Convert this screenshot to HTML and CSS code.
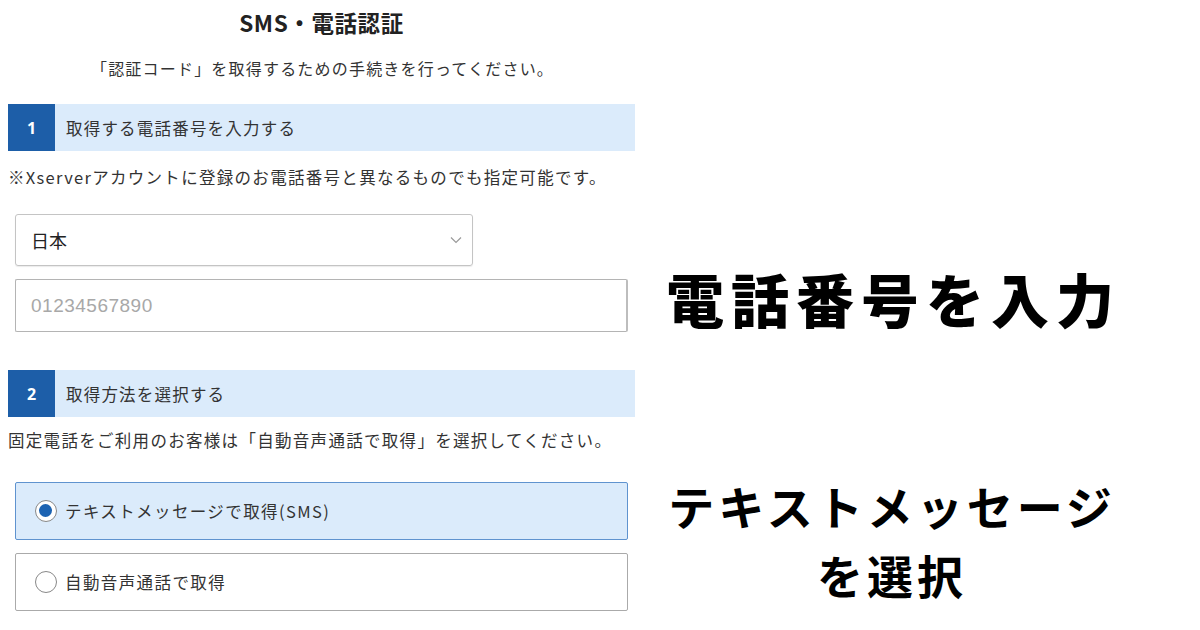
FILE: index.html
```html
<!DOCTYPE html>
<html lang="ja">
<head>
<meta charset="utf-8">
<link rel="stylesheet" href="styles.css">
</head>
<body>
<div class="page">
  <div class="form">
    <h1 class="title">SMS・電話認証</h1>
    <p class="lead">「認証コード」を取得するための手続きを行ってください。</p>

    <div class="step step-1">
      <div class="step-num">1</div>
      <div class="step-label">取得する電話番号を入力する</div>
    </div>
    <p class="note note-1">※Xserverアカウントに登録のお電話番号と異なるものでも指定可能です。</p>

    <div class="select">
      <span class="select-value">日本</span>
      <svg class="chevron" width="12" height="8" viewBox="0 0 12 8"><path d="M1 1.5 L6 6.5 L11 1.5" fill="none" stroke="#9a9a9a" stroke-width="1.2"/></svg>
    </div>
    <div class="input">
      <span class="placeholder">01234567890</span>
    </div>

    <div class="step step-2">
      <div class="step-num">2</div>
      <div class="step-label">取得方法を選択する</div>
    </div>
    <p class="note note-2">固定電話をご利用のお客様は「自動音声通話で取得」を選択してください。</p>

    <div class="option option-on">
      <span class="radio radio-on"></span>
      <span class="option-label">テキストメッセージで取得(SMS)</span>
    </div>
    <div class="option option-off">
      <span class="radio"></span>
      <span class="option-label">自動音声通話で取得</span>
    </div>
  </div>

  <div class="callouts">
    <div class="callout callout-1">電話番号を入力</div>
    <div class="callout callout-2">テキストメッセージ<br>を選択</div>
  </div>
</div>
</body>
</html>
```

FILE: styles.css
```css
* { box-sizing: border-box; }
html, body { margin: 0; padding: 0; background: #fff; }
body {
  width: 1200px;
  height: 630px;
  overflow: hidden;
  font-family: "Noto Sans CJK JP", "Noto Sans", sans-serif;
  color: #333;
}
.page {
  display: flex;
  width: 1200px;
  height: 630px;
}
.form {
  width: 640px;
  padding-left: 8px;
  padding-right: 5px;
  display: flex;
  flex-direction: column;
}
.title {
  margin: 0;
  height: 44px;
  line-height: 44px;
  font-size: 22.5px;
  font-weight: 700;
  text-align: center;
  color: #222;
  letter-spacing: 0.6px;
}
.lead {
  margin: 12px 0 0;
  height: 24px;
  line-height: 24px;
  font-size: 16px;
  text-align: center;
  letter-spacing: 1.2px;
  padding-left: 2px;
}
.step {
  display: flex;
  height: 47px;
  width: 627px;
  background: #dbebfb;
  margin-top: 24px;
}
.step-2 { margin-top: 38px; }
.step-num {
  width: 47px;
  background: #1d5ea8;
  color: #fff;
  font-weight: 700;
  font-size: 16px;
  display: flex;
  align-items: center;
  justify-content: center;
  font-family: "Noto Sans", sans-serif;
}
.step-label {
  display: flex;
  align-items: center;
  padding-left: 11px;
  font-size: 16.5px;
  letter-spacing: 1.2px;
  color: #333;
}
.note {
  margin: 0;
  height: 24px;
  line-height: 24px;
  font-size: 16.5px;
  letter-spacing: 1.3px;
  white-space: nowrap;
}
.note-1 { margin-top: 14px; }
.note-2 { margin-top: 11px; }
.select {
  margin: 25px 0 0 7px;
  width: 458px;
  height: 52px;
  border: 1px solid #c4c4c4;
  border-radius: 3px;
  display: flex;
  align-items: center;
  justify-content: space-between;
  padding: 0 10px 0 15px;
  box-shadow: 0 1px 1px rgba(0,0,0,0.08);
}
.select-value {
  font-size: 18px;
  color: #222;
}
.input {
  margin: 13px 0 0 7px;
  width: 613px;
  height: 53px;
  border: 1px solid #b4b4b4;
  border-right: 2px solid #bdbdbd;
  border-radius: 2px;
  display: flex;
  align-items: center;
  padding-left: 15px;
}
.placeholder {
  font-family: "Liberation Sans", Arial, sans-serif;
  font-size: 19px;
  color: #a8a8a8;
  letter-spacing: 0.5px;
}
.option {
  margin: 30px 0 0 7px;
  width: 613px;
  height: 58px;
  border: 1px solid #b4b4b4;
  border-radius: 2px;
  display: flex;
  align-items: center;
  padding-left: 19px;
}
.option-on {
  background: #dbebfb;
  border-color: #5f93cf;
}
.option-off {
  margin-top: 13px;
  background: #fff;
  border-color: #aaa;
}
.radio {
  width: 22px;
  height: 22px;
  border-radius: 50%;
  border: 1.5px solid #888;
  background: #fff;
  flex: none;
  position: relative;
}
.radio-on::after {
  content: "";
  position: absolute;
  left: 3px;
  top: 3px;
  width: 13px;
  height: 13px;
  border-radius: 50%;
  background: #1c63b2;
}
.option-label {
  margin-left: 8px;
  font-size: 16.5px;
  letter-spacing: 1.4px;
  color: #333;
}
.callouts {
  width: 500px;
  display: flex;
  flex-direction: column;
  align-items: center;
  color: #000;
}
.callout-1 {
  margin-top: 262px;
  font-size: 58px;
  line-height: 72px;
  font-weight: 900;
  letter-spacing: 7px;
  padding-left: 7px;
}
.callout-2 {
  margin-top: 137px;
  font-size: 46px;
  line-height: 69px;
  font-weight: 700;
  letter-spacing: 4px;
  text-align: center;
  padding-left: 4px;
}
```
